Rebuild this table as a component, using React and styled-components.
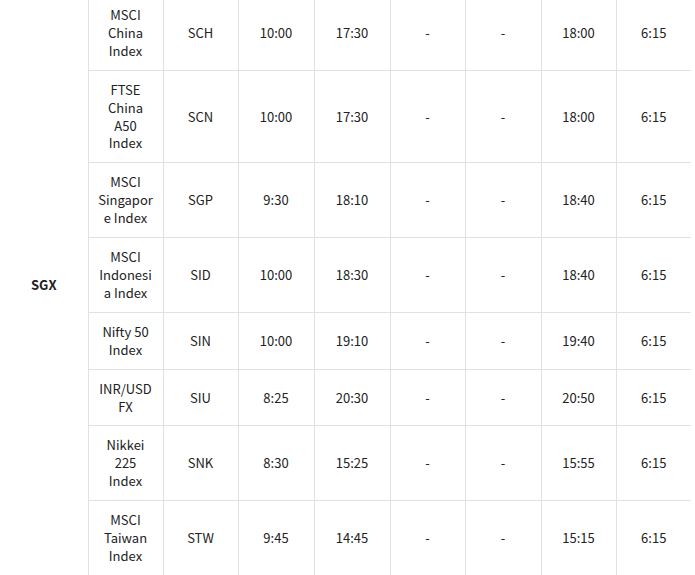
import React from "react";
import styled, { createGlobalStyle } from "styled-components";

const GlobalStyle = createGlobalStyle`
  html, body {
    margin: 0;
    padding: 0;
    background: #fff;
  }
  body {
    overflow: hidden;
    font-family: "Noto Sans CJK KR", "Noto Sans", sans-serif;
  }
`;

const rows = [
  ["MSCI China Index", "SCH", "10:00", "17:30", "-", "-", "18:00", "6:15"],
  ["FTSE China A50 Index", "SCN", "10:00", "17:30", "-", "-", "18:00", "6:15"],
  ["MSCI Singapore Index", "SGP", "9:30", "18:10", "-", "-", "18:40", "6:15"],
  ["MSCI Indonesia Index", "SID", "10:00", "18:30", "-", "-", "18:40", "6:15"],
  ["Nifty 50 Index", "SIN", "10:00", "19:10", "-", "-", "19:40", "6:15"],
  ["INR/USD FX", "SIU", "8:25", "20:30", "-", "-", "20:50", "6:15"],
  ["Nikkei 225 Index", "SNK", "8:30", "15:25", "-", "-", "15:55", "6:15"],
  ["MSCI Taiwan Index", "STW", "9:45", "14:45", "-", "-", "15:15", "6:15"],
];

const widths = [88, 75, 75, 76, 76, 75, 76, 75, 75];

const App = () => {
  return (
    <>
      <GlobalStyle />
      <Viewport>
        <Table>
          <colgroup>
            {widths.map((w, i) => (
              <col key={i} style={{ width: w }} />
            ))}
          </colgroup>
          <tbody>
            {rows.map((row, i) => (
              <tr key={row[1]}>
                {i === 0 && (
                  <Exchange rowSpan={rows.length}>SGX</Exchange>
                )}
                {row.map((cell, j) => (
                  <Cell key={j} $wrap={j === 0}>
                    {cell}
                  </Cell>
                ))}
              </tr>
            ))}
          </tbody>
        </Table>
      </Viewport>
    </>
  );
};
export default App;

const Viewport = styled.div`
  width: 695px;
  height: 575px;
  overflow: hidden;
`;

const Table = styled.table`
  width: 691px;
  margin-top: -5px;
  border-collapse: collapse;
  table-layout: fixed;
  font-size: 13px;
  line-height: 17.9px;
  color: #222;
`;

const Cell = styled.td`
  padding: 10px 9px;
  border: 1px solid #e1e1e1;
  text-align: center;
  vertical-align: middle;
  overflow-wrap: ${(p) => (p.$wrap ? "break-word" : "normal")};
  &:last-child {
    border-right: none;
  }
`;

const Exchange = styled(Cell)`
  border-left: none;
  font-weight: 700;
`;
